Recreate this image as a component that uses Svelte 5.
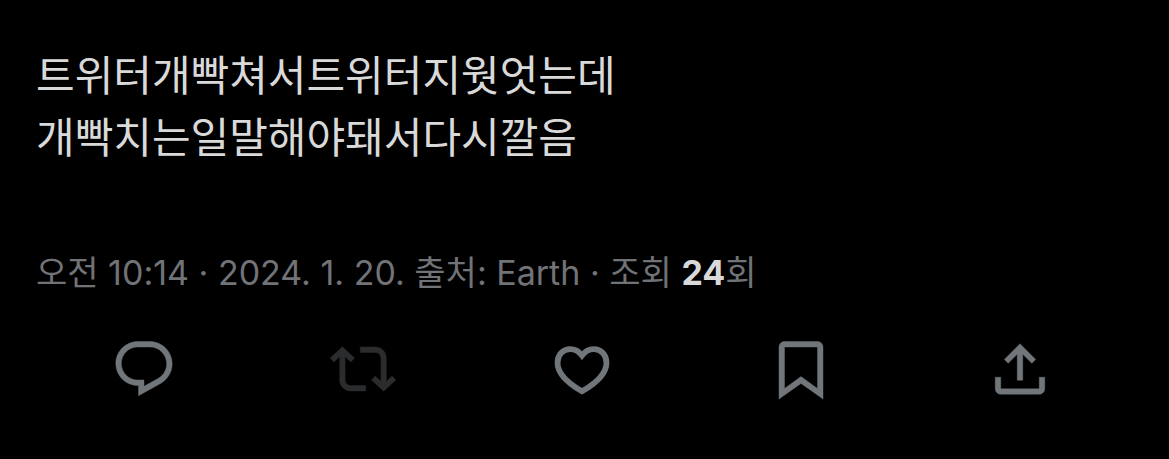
<script lang="ts">
  type Action = { name: string; label: string; path: string; disabled?: boolean };

  const lines = ['트위터개빡쳐서트위터지웟엇는데', '개빡치는일말해야돼서다시깔음'];

  const actions: Action[] = [
    {
      name: 'reply',
      label: '답글',
      path: 'M1.751 10c0-4.42 3.584-8 8.005-8h4.366c4.49 0 8.129 3.64 8.129 8.13 0 2.96-1.607 5.68-4.196 7.11l-8.054 4.46v-3.69h-.067c-4.49.1-8.183-3.51-8.183-8.01zm8.005-6c-3.317 0-6.005 2.69-6.005 6 0 3.37 2.77 6.08 6.138 6.01l.351-.01h1.761v2.3l5.087-2.81c1.951-1.08 3.163-3.13 3.163-5.36 0-3.39-2.744-6.13-6.129-6.13H9.756z'
    },
    {
      name: 'repost',
      label: '재게시',
      path: 'M4.5 3.88l4.432 4.14-1.364 1.46L5.5 7.55V16c0 1.1.896 2 2 2H13v2H7.5c-2.209 0-4-1.79-4-4V7.55L1.432 9.48.068 8.02 4.5 3.88zM16.5 6H11V4h5.5c2.209 0 4 1.79 4 4v8.45l2.068-1.93 1.364 1.46-4.432 4.14-4.432-4.14 1.364-1.46 2.068 1.93V8c0-1.1-.896-2-2-2z',
      disabled: true
    },
    {
      name: 'like',
      label: '마음에 들어요',
      path: 'M12 7.1C10.8 5.5 9.3 4.8 7.7 4.8 5 4.8 3.1 6.9 3.1 9.7c0 3.9 3.7 7.4 8.9 10.4 5.2-3 8.9-6.5 8.9-10.4 0-2.8-1.9-4.9-4.6-4.9-1.6 0-3.1.7-4.3 2.3z'
    },
    {
      name: 'bookmark',
      label: '북마크',
      path: 'M4 4c0-1.1.9-2 2-2h12c1.1 0 2 .9 2 2v18.94l-8-5.71-8 5.71V4zM6 4v15.06l6-4.29 6 4.29V4H6z'
    },
    {
      name: 'share',
      label: '공유하기',
      path: 'M12 2.8l5.7 5.7-1.41 1.42L13 6.62V16.1h-2V6.62l-3.3 3.3-1.41-1.42L12 2.8zM21 15v4.2c0 1.1-.9 2-2 2H5c-1.1 0-2-.9-2-2V15h2v4.2h14V15h2z'
    }
  ];
</script>

<article class="post">
  <p class="body">
    {#each lines as line}
      <span>{line}</span>
    {/each}
  </p>

  <div class="meta">
    <time datetime="2024-01-20T10:14">오전 10:14 · 2024. 1. 20.</time> 출처: Earth · 조회 <strong>24</strong>회
  </div>

  <div class="actions">
    {#each actions as action}
      <button type="button" class={action.name} aria-label={action.label} disabled={action.disabled}>
        <svg viewBox="0 0 24 24" aria-hidden="true"><path d={action.path} /></svg>
      </button>
    {/each}
  </div>
</article>

<style>
  :global(body) {
    margin: 0;
    background: #000;
  }

  .post {
    padding: 45px 36px 58px;
    color: #d9d9d9;
    font-family: Inter, 'Noto Sans CJK KR', sans-serif;
  }

  .body {
    margin: 0;
    font-size: 42px;
    line-height: 62px;
  }

  .body span {
    display: block;
  }

  .meta {
    margin-top: 80px;
    color: #717377;
    font-size: 34px;
    line-height: 48px;
  }

  .meta strong {
    color: #d9d9d9;
    font-weight: 700;
  }

  .actions {
    display: flex;
    justify-content: space-around;
    margin: 39px -2px 0;
    padding-right: 6px;
  }

  button {
    display: flex;
    padding: 0;
    border: 0;
    background: none;
    color: #71767b;
    cursor: pointer;
  }

  button:disabled {
    color: #2b2c2e;
    cursor: default;
  }

  svg {
    width: 66px;
    height: 66px;
    fill: currentColor;
    stroke: currentColor;
    stroke-width: 0.15;
  }

  .like svg {
    fill: none;
    stroke-width: 2.1;
  }
</style>
